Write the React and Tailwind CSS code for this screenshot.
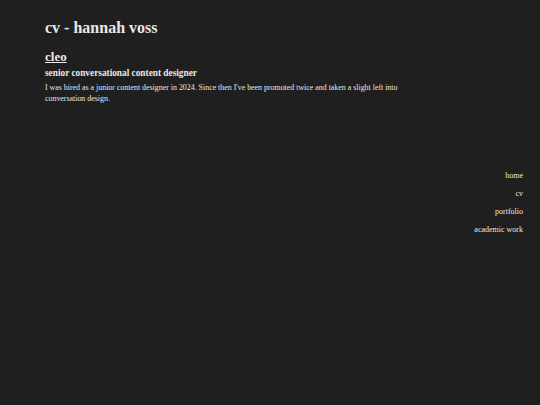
export default function App() {
  return (
    <div className="min-h-[405px] w-full bg-[#1f1f1f] text-[#e8e8e8] flex" style={{ fontFamily: '"Liberation Serif", "Times New Roman", serif' }}>
      <main className="flex-1 pl-[45px] pt-[18px]">
        <h1 className="text-[16px] font-bold leading-[20px]">cv - hannah voss</h1>
        <h2 className="mt-[11px] text-[13px] font-bold underline leading-[16px]">cleo</h2>
        <h3 className="mt-[1px] text-[9.3px] font-bold leading-[14px]">senior conversational content designer</h3>
        <p className="mt-[2px] text-[7.9px] leading-[11px] max-w-[360px]">
          I was hired as a junior content designer in 2024. Since then I've been promoted twice and taken a slight left into conversation design.
        </p>
      </main>
      <nav className="self-center flex flex-col items-end gap-[8px] pr-[17px] text-[8px] leading-[10px]">
        <a>home</a>
        <a>cv</a>
        <a>portfolio</a>
        <a>academic work</a>
      </nav>
    </div>
  );
}
